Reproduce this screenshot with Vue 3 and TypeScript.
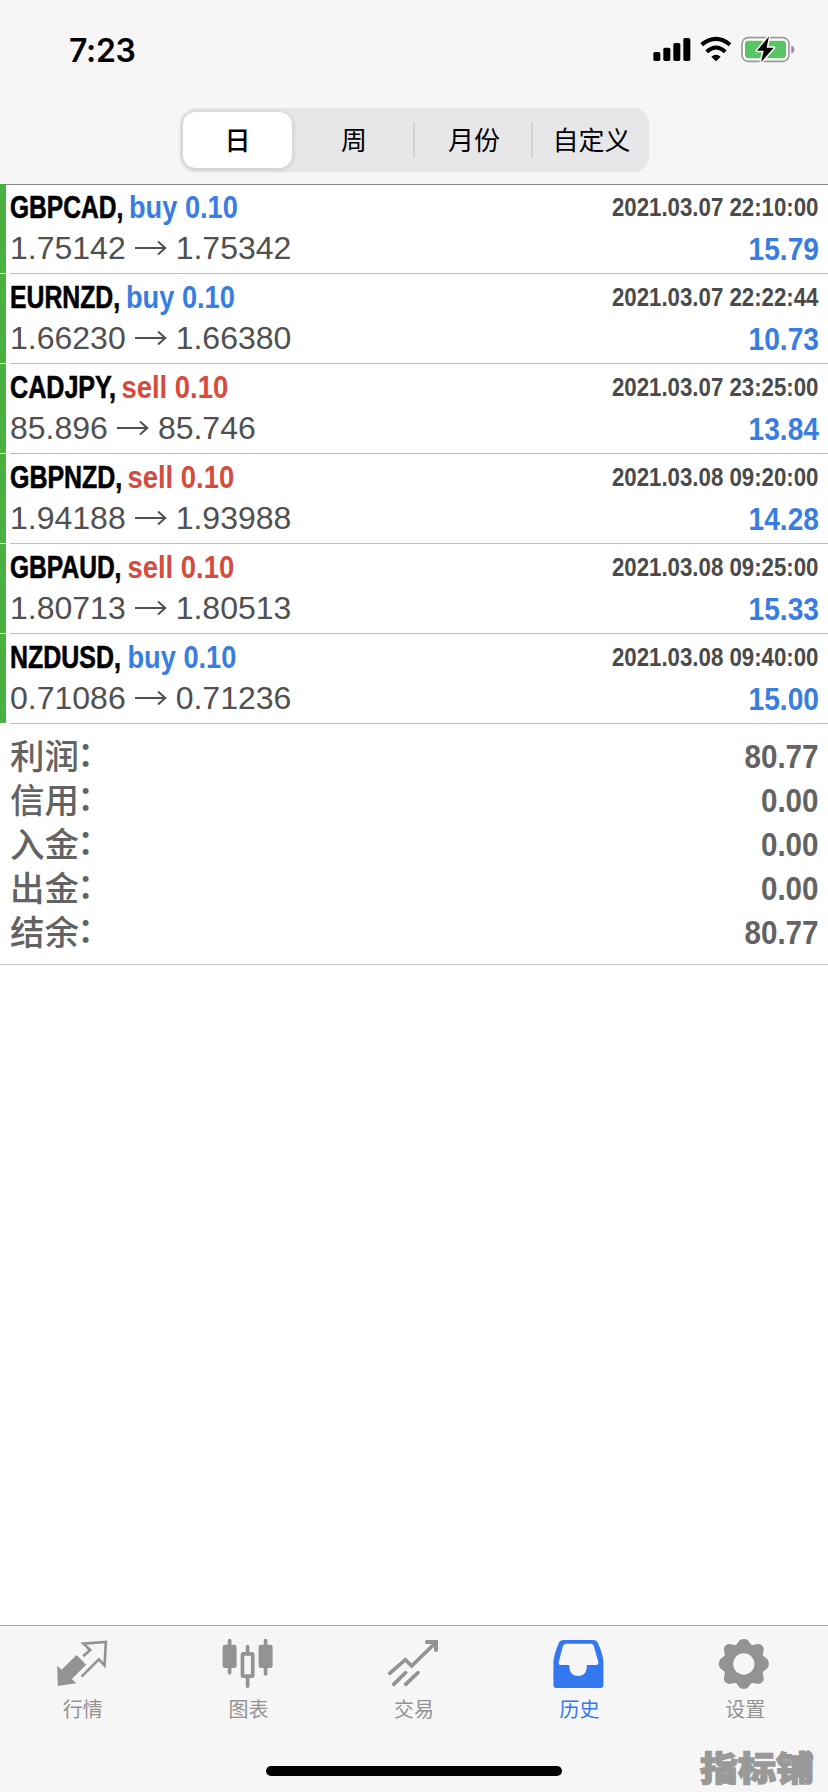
<script setup lang="ts">
import { ref } from 'vue'

interface Deal {
  symbol: string
  symbolScale: number
  side: 'buy' | 'sell'
  volume: string
  sideX: number
  open: string
  close: string
  time: string
  profit: string
}

interface Total {
  label: string
  value: string
}

const periods = ['日', '周', '月份', '自定义']
const activePeriod = ref(0)

// Horizontal condensing per kind of figure; each text is squeezed about its own anchor.
const sideScale = { buy: 0.85, sell: 0.857 }
const at = (x: number, y: number, scale: number) => `translate(${x} ${y}) scale(${scale} 1)`

const deals: Deal[] = [
  { symbol: 'GBPCAD,', symbolScale: 0.768, side: 'buy', volume: '0.10', sideX: 129, open: '1.75142', close: '1.75342', time: '2021.03.07 22:10:00', profit: '15.79' },
  { symbol: 'EURNZD,', symbolScale: 0.775, side: 'buy', volume: '0.10', sideX: 126, open: '1.66230', close: '1.66380', time: '2021.03.07 22:22:44', profit: '10.73' },
  { symbol: 'CADJPY,', symbolScale: 0.785, side: 'sell', volume: '0.10', sideX: 121.5, open: '85.896', close: '85.746', time: '2021.03.07 23:25:00', profit: '13.84' },
  { symbol: 'GBPNZD,', symbolScale: 0.78, side: 'sell', volume: '0.10', sideX: 127.5, open: '1.94188', close: '1.93988', time: '2021.03.08 09:20:00', profit: '14.28' },
  { symbol: 'GBPAUD,', symbolScale: 0.768, side: 'sell', volume: '0.10', sideX: 127.5, open: '1.80713', close: '1.80513', time: '2021.03.08 09:25:00', profit: '15.33' },
  { symbol: 'NZDUSD,', symbolScale: 0.78, side: 'buy', volume: '0.10', sideX: 127.5, open: '0.71086', close: '0.71236', time: '2021.03.08 09:40:00', profit: '15.00' },
]

const totals: Total[] = [
  { label: '利润', value: '80.77' },
  { label: '信用', value: '0.00' },
  { label: '入金', value: '0.00' },
  { label: '出金', value: '0.00' },
  { label: '结余', value: '80.77' },
]
</script>

<template>
  <div class="screen">
    <header class="top">
      <div class="status">
        <span class="clock">7:23</span>
        <svg class="status-icons" viewBox="710 105 440 85">
          <rect x="717" y="156" width="21" height="27" rx="5" />
          <rect x="747" y="143" width="21" height="40" rx="5" />
          <rect x="777" y="129" width="21" height="54" rx="5" />
          <rect x="807" y="114" width="21" height="69" rx="5" />
          <path d="M862 134Q905 99 947 134" fill="none" stroke="#000" stroke-width="12" />
          <path d="M877 155Q905 130 933 155" fill="none" stroke="#000" stroke-width="12" />
          <path d="M891 170Q905 158 919 170L905 184Z" />
          <rect x="983" y="113" width="141" height="71" rx="19" fill="#fff" stroke="#9b989c" stroke-width="5" />
          <rect x="992" y="122" width="123" height="53" rx="10" fill="#59c463" />
          <path d="M1131 137Q1140 140 1140 149T1131 160Z" fill="#9b849d" />
          <path d="M1064 109L1028 152H1048L1040 187L1078 143H1057Z" stroke="#fff" stroke-width="9" paint-order="stroke" stroke-linejoin="round" />
        </svg>
      </div>
      <div class="segments">
        <button
          v-for="(period, i) in periods"
          :key="period"
          class="segment"
          :class="{ active: i === activePeriod, divided: i > 1 }"
          @click="activePeriod = i"
        >{{ period }}</button>
      </div>
    </header>

    <main class="history">
      <section v-for="deal in deals" :key="deal.time" class="deal">
        <div class="deal-info">
          <svg class="deal-title" width="300" height="43">
            <text class="condensed symbol" :transform="at(10, 33.5, deal.symbolScale)">{{ deal.symbol }}</text>
            <text class="condensed" :class="deal.side" :transform="at(deal.sideX, 33.5, sideScale[deal.side])">{{ deal.side }} {{ deal.volume }}</text>
          </svg>
          <div class="prices">
            <span>{{ deal.open }}</span>
            <svg class="arrow" viewBox="0 0 32 20"><path d="M0 10H30M23 3.5L30.3 10L23 16.5" /></svg>
            <span>{{ deal.close }}</span>
          </div>
        </div>
        <svg class="deal-result" width="240" height="88">
          <text class="condensed time" text-anchor="end" :transform="at(230.5, 32, 0.89)">{{ deal.time }}</text>
          <text class="condensed buy" text-anchor="end" :transform="at(231, 75.5, 0.88)">{{ deal.profit }}</text>
        </svg>
      </section>

      <section class="totals">
        <div v-for="total in totals" :key="total.label" class="total">
          <span class="total-label">{{ total.label }}<span class="colon">：</span></span>
          <svg width="100" height="44">
            <text class="condensed amount" text-anchor="end" :transform="at(90.5, 34, 0.87)">{{ total.value }}</text>
          </svg>
        </div>
      </section>
    </main>

    <nav class="tabs">
      <a class="tab">
        <svg viewBox="173.4 87 150 150">
          <path d="M229 135L258 164L215 207L228 220L173 228L171 167L184 179Z" />
          <path d="M249 139L270 120L250 101L317 96L313 166L296 148L244 200" fill="none" stroke="currentColor" stroke-width="8" />
        </svg>
        <span>行情</span>
      </a>
      <a class="tab">
        <svg viewBox="670.2 87 150 150">
          <rect x="669" y="104" width="42" height="70" rx="7" />
          <rect x="777" y="104" width="42" height="70" rx="7" />
          <path d="M690 92V188M798 92V192M744 110V130M744 202V229" stroke="currentColor" stroke-width="11" stroke-linecap="round" />
          <rect x="728.5" y="131.5" width="31" height="67" rx="3" fill="none" stroke="currentColor" stroke-width="11" />
        </svg>
        <span>图表</span>
      </a>
      <a class="tab">
        <svg viewBox="267 87 150 150">
          <path d="M269 190L316 149L335 168L407 98M281 223L317 188M317 223L354 188" fill="none" stroke="currentColor" stroke-width="11" stroke-linecap="round" stroke-linejoin="miter" />
          <path d="M380 90H414V121Q414 126 408 126T402 121V102H380Q375 102 375 96T380 90Z" />
        </svg>
        <span>交易</span>
      </a>
      <a class="tab current">
        <svg viewBox="79.8 87 150 150">
          <path fill-rule="evenodd" d="M106 90H194Q205 90 209 100Q225 137 225 158V225Q225 234 216 234H84Q75 234 75 225V158Q75 137 91 100Q95 90 106 90ZM114 101Q107 101 104 107L91 157Q90 165 97 165H123V174Q126 198 149 198T175 174V165H203Q211 165 210 157L196 107Q193 101 187 101Z" />
        </svg>
        <span>历史</span>
      </a>
      <a class="tab">
        <svg viewBox="576.6 87 150 150">
          <path fill-rule="evenodd" d="M636 90Q648 84 660 90L669 103Q671 106 675 105L690 102Q705 102 708 117L705 134Q705 137 708 139L719 148Q727 162 719 175L707 184Q704 187 705 190L708 207Q706 219 692 222L675 219Q671 218 669 221L660 233Q648 240 636 233L627 221Q625 218 621 219L604 222Q590 219 588 207L591 190Q592 187 589 184L577 175Q569 162 577 148L588 139Q591 137 591 134L588 117Q591 102 606 102L621 105Q625 106 627 103ZM648 130A32 32 0 1 0 648 194A32 32 0 1 0 648 130Z" />
        </svg>
        <span>设置</span>
      </a>
      <div class="home-indicator"></div>
      <div class="watermark">指标铺</div>
    </nav>
  </div>
</template>

<style>
body {
  margin: 0;
}
</style>

<style scoped>
.screen {
  width: 828px;
  height: 1792px;
  display: flex;
  flex-direction: column;
  background: #fff;
  color: #000;
  font-family: "Liberation Sans", "Noto Sans CJK SC", sans-serif;
  overflow: hidden;
}
.top {
  height: 184px;
  flex: none;
  background: #f6f6f6;
}
.status {
  height: 108px;
  box-sizing: border-box;
  padding: 35px 30px 0 69px;
  display: flex;
  justify-content: space-between;
  align-items: flex-start;
}
.clock {
  font: 600 32px/31px Inter, sans-serif;
  letter-spacing: -0.3px;
}
.status-icons {
  width: 146.67px;
  height: 28.33px;
}
.segments {
  width: 469px;
  height: 64px;
  box-sizing: border-box;
  margin-left: 180px;
  padding: 4px 0 4px 3px;
  display: grid;
  grid-template-columns: 109px 122px 118px 117px;
  border-radius: 16px;
  background: #e7e7e9;
}
.segment {
  border: 0;
  padding: 0 0 2px 2px;
  background: none;
  position: relative;
  font: 400 26px/54px "Noto Sans CJK SC", sans-serif;
  color: #000;
}
.segment.active {
  padding-left: 0;
  background: #fff;
  border-radius: 13px;
  font-weight: 500;
  box-shadow: 0 1px 6px rgba(0, 0, 0, 0.16);
}
.segment.divided::before {
  content: "";
  position: absolute;
  left: -1px;
  top: 10px;
  width: 2px;
  height: 36px;
  background: #d2d2d5;
}
.history {
  flex: 1;
}
.deal {
  height: 90px;
  display: flex;
  justify-content: space-between;
  background:
    linear-gradient(#bebec0, #bebec0) 10px 89px / 818px 1px no-repeat,
    linear-gradient(#48b140, #48b140) 0 0 / 6px 89px no-repeat;
}
.deal:first-child {
  background:
    linear-gradient(#bebec0, #bebec0) 10px 89px / 818px 1px no-repeat,
    linear-gradient(#8a8a8c, #8a8a8c) 6px 0 / 822px 1px no-repeat,
    linear-gradient(#48b140, #48b140) 0 0 / 6px 89px no-repeat;
}
.deal-title,
.deal-result {
  display: block;
}
.condensed {
  font-family: "Liberation Sans", sans-serif;
  font-weight: 700;
  font-size: 32px;
}
.symbol {
  stroke: #000;
  stroke-width: 0.6px;
}
.buy {
  fill: #377de2;
}
.sell {
  fill: #d64b3e;
}
.time {
  font-size: 25px;
  fill: #4a4a4a;
}
.prices {
  display: flex;
  align-items: center;
  gap: 9px;
  padding-left: 10px;
  height: 42px;
  font-size: 32px;
  line-height: 42px;
  color: #505050;
}
.arrow {
  width: 32px;
  height: 20px;
  fill: none;
  stroke: #505050;
  stroke-width: 2;
}
.totals {
  height: 241px;
  box-sizing: border-box;
  padding-top: 10px;
  border-bottom: 1px solid #c4c4c6;
}
.total {
  height: 44px;
  display: flex;
  justify-content: space-between;
  padding-left: 10px;
}
.total-label {
  display: flex;
  font: 500 34.5px/40px "Noto Sans CJK SC", sans-serif;
  color: #636363;
}
.colon {
  margin: -3px 0 0 -2px;
}
.amount {
  font-size: 34px;
  fill: #636363;
}
.tabs {
  position: relative;
  height: 167px;
  box-sizing: border-box;
  flex: none;
  display: grid;
  grid-template-columns: repeat(5, 1fr);
  border-top: 1px solid #aaaaac;
  background: #f6f6f6;
}
.tab {
  display: flex;
  flex-direction: column;
  align-items: center;
  padding-top: 13px;
  color: #939393;
  font: 400 20px/28px "Noto Sans CJK SC", sans-serif;
}
.tab svg {
  width: 50px;
  height: 50px;
  margin-bottom: 6px;
  fill: currentColor;
  overflow: visible;
}
.tab.current {
  color: #3478f0;
}
.home-indicator {
  position: absolute;
  left: 266px;
  top: 140px;
  width: 296px;
  height: 10px;
  border-radius: 5px;
  background: #000;
}
.watermark {
  position: absolute;
  left: 700px;
  top: 119px;
  font: 900 38px/44px "Noto Sans CJK SC", sans-serif;
  color: #999;
  -webkit-text-stroke: 1.5px #999;
  transform: scaleY(0.9);
}
</style>
